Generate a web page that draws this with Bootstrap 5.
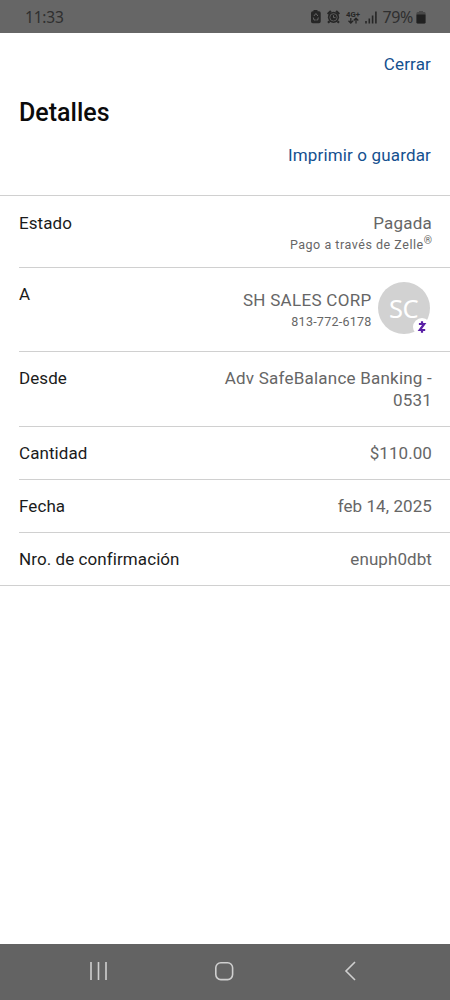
<!DOCTYPE html>
<html lang="es">
<head>
<meta charset="utf-8">
<meta name="viewport" content="width=device-width, initial-scale=1">
<title>Detalles</title>
<link href="https://cdn.jsdelivr.net/npm/bootstrap@5.3.0/dist/css/bootstrap.min.css" rel="stylesheet">
<style>
body{font-family:Roboto,"Liberation Sans",sans-serif;font-size:17px;line-height:22px;color:#1b1b1b;background:#fff}
.screen{height:1000px;overflow:hidden}
.statusbar{height:33px;background:#666;color:#2f2f2f;padding:0 24px 0 25px}
.clock{font:15.5px/34px "Noto Sans",sans-serif;letter-spacing:-.2px}
.charge{font:16px/34px "Noto Sans",sans-serif;letter-spacing:-.4px}
.action{color:#14508f;text-decoration:none;letter-spacing:.15px}
.top{height:163px;padding:20px 19px 0;border-bottom:1px solid #d0d0d0}
.top h1{font-size:25px;line-height:28px;font-weight:500;color:#0b0b0b;margin:24px 0 17px;letter-spacing:0}
.details{border-bottom:1px solid #d0d0d0}
.item{margin-left:19px;padding:16px 18px 0 0;height:53px;letter-spacing:.08px}
.item + .item{border-top:1px solid #d0d0d0;padding-top:15px}
.item dt{font-weight:400}
.item dd{margin:0;color:#666;text-align:right}
.item .fine{font-size:12.5px;line-height:21px;letter-spacing:.53px}
.item .phone{letter-spacing:.25px}
.fine sup{font-size:10.5px;top:-5px;line-height:0;letter-spacing:0}
.item .spaced{letter-spacing:.22px}
.item .payname{letter-spacing:.3px}
.state{height:71px}.payee{height:84px}.origin{height:75px}
.contact{padding-top:6px}
.avatar{width:52px;height:52px;background:#d2d2d2;color:#fff;font:25.5px/53px "Noto Sans",sans-serif;letter-spacing:-.5px;margin:-1px 2.500px 0 6px}
.zelle{right:-2px;bottom:-3px}
.navkeys{height:56px;background:#636363}
</style>
</head>
<body>
<div class="screen d-flex flex-column">
  <header class="statusbar d-flex justify-content-between">
    <span class="clock">11:33</span>
    <div class="d-flex align-items-center">
      <svg width="73" height="20" viewBox="0 0 73 20" fill="#262626">
        <path d="M3.500 3h4v1.200H9q1.700 0 1.700 1.700v8.600q0 1.700-1.700 1.700H2.700Q1 16.200 1 14.500V5.900q0-1.700 1.700-1.700h.8z"/>
        <g fill="none" stroke="#666" stroke-width="1"><path d="M3.900 9l2-2.500 2 2.500M3.300 10.500l.7 2.500h1.700M8.300 10.500l-.6 2.500H6.400"/></g>
        <circle cx="23.500" cy="10.300" r="5.600"/><path d="M17.700 7l3.200-3M26.100 4l3.200 3M19.500 14.200L18 15.700M27.500 14.200l1.500 1.500" stroke="#262626" stroke-width="2.200"/>
        <circle cx="23.500" cy="10.300" r="3.700" fill="none" stroke="#666" stroke-width=".8"/><path d="M23.500 8.300v2.300h2" fill="none" stroke="#666"/>
        <text x="36" y="9.500" font-family="Roboto" font-weight="700" font-size="7.500" textLength="14" lengthAdjust="spacingAndGlyphs">4G+</text>
        <path d="M40.800 11v5M38.500 13.700l2.300 2.300 2.300-2.300M46 16.500v-5M43.700 13.500l2.300-2.300 2.300 2.300" fill="none" stroke="#262626" stroke-width="1.300"/>
        <path d="M56 14v2.500M59.300 11.500v5M62.600 8.500v8M65.900 4.500v12" stroke="#262626" stroke-width="1.600"/>
      </svg>
      <span class="charge">79%</span>
      <svg style="margin-left:3px" width="10" height="14" viewBox="0 0 10 14"><path d="M3 1h4v1.500H3z" fill="#484848"/><rect x=".5" y="2" width="9" height="11.500" rx="1.300" fill="#484848"/><path d="M.5 4.500h9v7.700q0 1.300-1.300 1.300H1.800Q.5 13.500.5 12.200z" fill="#202020"/></svg>
    </div>
  </header>
  <main class="flex-grow-1">
    <section class="top">
      <div class="text-end"><a class="action" href="#">Cerrar</a></div>
      <h1>Detalles</h1>
      <div class="text-end"><a class="action" href="#">Imprimir o guardar</a></div>
    </section>
    <dl class="details mb-0">
      <div class="item state d-flex justify-content-between"><dt>Estado</dt><dd><span class="spaced">Pagada</span><div class="fine">Pago a través de Zelle<sup>®</sup></div></dd></div>
      <div class="item payee d-flex justify-content-between"><dt>A</dt>
        <dd class="d-flex"><div class="contact"><div class="payname">SH SALES CORP</div><div class="fine phone">813-772-6178</div></div>
          <div class="avatar rounded-circle position-relative text-center">SC
            <svg class="zelle position-absolute" width="20" height="20" viewBox="0 0 20 20"><circle cx="10" cy="10" r="9" fill="#fff"/><path d="M6.900 7h5.300L7.800 13h5.400M10 4.300v2.500M10 13.200v2.500" fill="none" stroke="#5a20a6" stroke-width="2.200"/></svg>
          </div>
        </dd>
      </div>
      <div class="item origin d-flex justify-content-between"><dt>Desde</dt><dd class="spaced">Adv SafeBalance Banking -<br>0531</dd></div>
      <div class="item d-flex justify-content-between"><dt>Cantidad</dt><dd>$110.00</dd></div>
      <div class="item d-flex justify-content-between"><dt>Fecha</dt><dd>feb 14, 2025</dd></div>
      <div class="item d-flex justify-content-between"><dt>Nro. de confirmación</dt><dd>enuph0dbt</dd></div>
    </dl>
  </main>
  <nav class="navkeys">
    <svg class="d-block" width="450" height="56" viewBox="0 1 450 56" fill="none" stroke="#cfcfcf" stroke-width="1.600"><path d="M91 19v18M98.500 19v18M106 19v18M355 19l-9 9 9 9"/><rect x="215.800" y="19.800" width="16.800" height="16.800" rx="5"/></svg>
  </nav>
</div>
<script src="https://cdn.jsdelivr.net/npm/bootstrap@5.3.0/dist/js/bootstrap.bundle.min.js"></script>
</body>
</html>
